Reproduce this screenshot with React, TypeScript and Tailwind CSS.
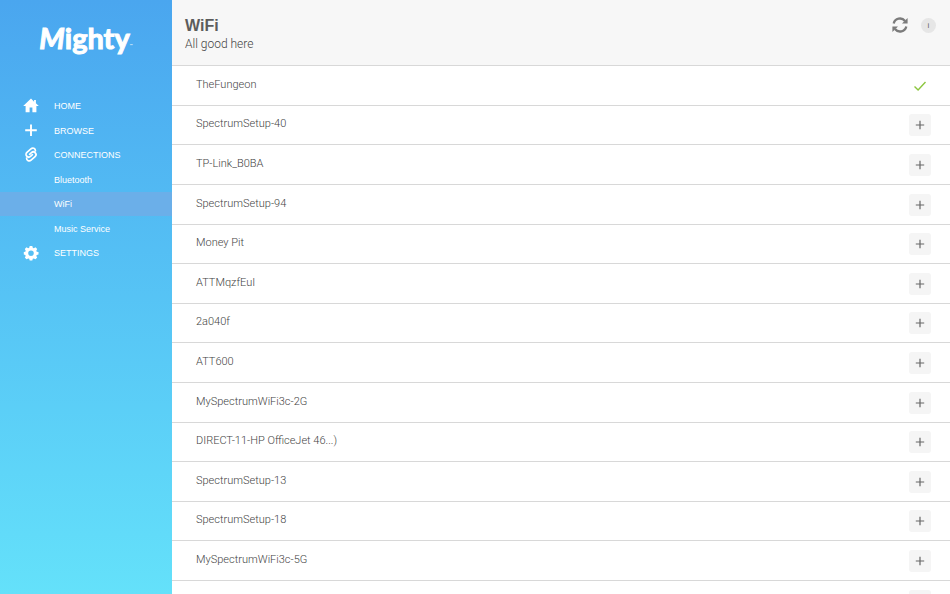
import React from "react";

type NavItem = { label: string; icon?: "home" | "plus" | "link" | "gear"; active?: boolean };

const NAV: NavItem[] = [
  { label: "HOME", icon: "home" },
  { label: "BROWSE", icon: "plus" },
  { label: "CONNECTIONS", icon: "link" },
  { label: "Bluetooth" },
  { label: "WiFi", active: true },
  { label: "Music Service" },
  { label: "SETTINGS", icon: "gear" },
];

// An empty name is a network that does not broadcast its SSID.
const NETWORKS = [
  "TheFungeon",
  "SpectrumSetup-40",
  "TP-Link_B0BA",
  "SpectrumSetup-94",
  "Money Pit",
  "ATTMqzfEuI",
  "2a040f",
  "ATT600",
  "MySpectrumWiFi3c-2G",
  "DIRECT-11-HP OfficeJet 46...)",
  "SpectrumSetup-13",
  "SpectrumSetup-18",
  "MySpectrumWiFi3c-5G",
  "",
];

const CONNECTED = "TheFungeon";

function NavIcon({ name }: { name: NonNullable<NavItem["icon"]> }) {
  switch (name) {
    case "home":
      return (
        <svg viewBox="0 0 16 16" className="h-4 w-4" fill="currentColor" aria-hidden="true">
          <path d="M8 .6.2 8h2.400v6.200h4V9.600h2.800v4.600h4V8h2.400l-2.900-2.700V2h-1.800v1.700z" />
        </svg>
      );
    case "plus":
      return (
        <svg viewBox="0 0 16 16" className="h-4 w-4" fill="none" stroke="currentColor" strokeWidth="1.900" aria-hidden="true">
          <path d="M8 1.500v11.500M2.200 7.200h11.600" />
        </svg>
      );
    case "link":
      return (
        <svg viewBox="0 0 16 16" className="h-4 w-4" fill="none" stroke="currentColor" strokeWidth="1.700" strokeLinecap="round" aria-hidden="true">
          <g transform="rotate(-42 8 7.500)">
            <path d="M8.900 8.600H6.400a2.700 2.700 0 0 1 0-5.400h5.400a2.700 2.700 0 0 1 1.900 4.600" />
            <path d="M7.100 6.400h2.500a2.700 2.700 0 0 1 0 5.400H4.200a2.700 2.700 0 0 1-1.900-4.600" />
          </g>
        </svg>
      );
    case "gear":
      return (
        <svg viewBox="0 0 16 16" className="h-4 w-4" fill="currentColor" aria-hidden="true">
          <path
            fillRule="evenodd"
            d="M6.700 1h2.600l.5 1.800 1 .4 1.700-.9 1.700 1.700-.9 1.700.4 1 1.800.4v2.400l-1.800.4-.4 1 .9 1.700-1.700 1.700-1.700-.9-1 .4-.5 1.800H6.700l-.5-1.800-1-.4-1.700.9-1.700-1.700.9-1.700-.4-1L.8 9.500V7.100l1.500-.4.4-1L1.800 4l1.700-1.700 1.700.9 1-.4zM8 5.500a2.800 2.800 0 1 0 0 5.600 2.800 2.800 0 0 0 0-5.600z"
          />
        </svg>
      );
  }
}

function Sidebar() {
  return (
    <aside className="w-43 shrink-0 bg-linear-to-b from-[#4aa6ef] to-[#64e1fa] text-white">
      <div className="flex h-[94px] items-start justify-center pt-5 font-[Lato,sans-serif] text-[29px] leading-9 font-bold [-webkit-text-stroke:1px_white]">
        <span className="italic">M</span>
        <span>ighty</span>
        <span className="pt-6 text-[4px] leading-none font-normal [-webkit-text-stroke:0px]">™</span>
      </div>
      <nav aria-label="Main">
        <ul>
          {NAV.map((item) => (
            <li key={item.label} className="even:mt-px">
              <a
                href="#"
                aria-current={item.active ? "page" : undefined}
                className={`flex h-6 items-center text-[9px] leading-3 ${item.active ? "bg-[#6bafe9]" : ""}`}
              >
                <span className="flex w-[54px] justify-center pr-2 pl-4">
                  {item.icon && <NavIcon name={item.icon} />}
                </span>
                <span>{item.label}</span>
              </a>
            </li>
          ))}
        </ul>
      </nav>
    </aside>
  );
}

function NetworkRow({ name }: { name: string }) {
  return (
    <li className="flex h-10 items-center justify-between border-b border-[#d8d8d8] pr-[19px] pl-6 nth-[5n]:h-[39px] nth-[5n+2]:h-[39px]">
      <span className="pb-0.5 font-[Roboto,sans-serif] text-[11px] leading-4 font-light text-[#444]">{name}</span>
      {name === CONNECTED ? (
        <svg viewBox="0 0 22 22" className="h-[22px] w-[22px]" fill="none" stroke="#8cc63f" strokeWidth="1.400" role="img" aria-label="Connected">
          <path d="m5.500 11.500 3.600 3.600 7.400-8" />
        </svg>
      ) : (
        <button
          type="button"
          aria-label={`Connect to ${name || "hidden network"}`}
          className="flex h-[22px] w-[22px] items-center justify-center rounded-[3px] bg-[#f5f5f5] text-[#666]"
        >
          <svg viewBox="0 0 10 10" className="h-2.5 w-2.5" fill="none" stroke="currentColor" strokeWidth="1.200">
            <path d="M5 .8v8.400M.8 5h8.400" />
          </svg>
        </button>
      )}
    </li>
  );
}

export default function App() {
  return (
    <div className="flex h-screen overflow-hidden bg-white font-['Liberation_Sans',Arial,sans-serif]">
      <Sidebar />
      <main className="min-w-0 flex-1">
        <header className="flex h-[66px] items-start justify-between border-b border-[#d8d8d8] bg-[#f7f7f7] pr-3.5 pl-[13px]">
          <div className="pt-4 text-[#5c5c5c]">
            <h1 className="text-base leading-5 font-bold">WiFi</h1>
            <p className="font-[Roboto,sans-serif] text-xs leading-4 font-light text-[#444]">All good here</p>
          </div>
          <div className="flex items-center gap-3 pt-4">
            <button type="button" aria-label="Refresh" className="text-[#7b7b7b]">
              <svg viewBox="0 0 18 18" className="h-[18px] w-[18px]" aria-hidden="true">
                <path d="M2.700 7.500A6.400 6.400 0 0 1 14 5M15.300 10.500A6.400 6.400 0 0 1 4 13" fill="none" stroke="currentColor" strokeWidth="2.300" />
                <path d="M16.600 2v5.600H11zM1.400 16v-5.600H7z" fill="currentColor" />
              </svg>
            </button>
            <button type="button" aria-label="Information" className="h-[15px] w-[15px] rounded-full bg-[#e6e6e6] text-[8px] leading-[15px] text-[#666]">
              i
            </button>
          </div>
        </header>
        <ul>
          {NETWORKS.map((name) => (
            <NetworkRow key={name} name={name} />
          ))}
        </ul>
      </main>
    </div>
  );
}
